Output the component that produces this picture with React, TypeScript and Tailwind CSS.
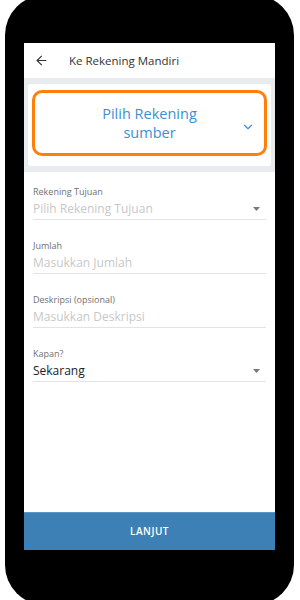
import { ArrowLeft, ChevronDown } from 'lucide-react';

function Caret() {
  return (
    <svg width="7" height="4" viewBox="0 0 7 4" className="shrink-0">
      <path d="M0 0 L7 0 L3.5 4 Z" fill="#7a7a7a" />
    </svg>
  );
}

interface FieldProps {
  label: string;
  value: string;
  filled?: boolean;
  dropdown?: boolean;
}

function Field({ label, value, filled, dropdown }: FieldProps) {
  return (
    <div className="h-[54px] pt-[13px]">
      <div className="text-[9px] leading-[12px] text-[#707070]">{label}</div>
      <div className="flex items-center justify-between h-[22px] pr-[6px] border-b border-[#e3e3e3]">
        <span className={filled ? 'text-[12px] text-[#222]' : 'text-[12px] text-[#c8c8c8]'}>{value}</span>
        {dropdown && <Caret />}
      </div>
    </div>
  );
}

export default function App() {
  return (
    <div className="w-[300px] h-[600px] bg-white overflow-hidden" style={{ fontFamily: '"Open Sans", sans-serif' }}>
      <div className="ml-[5px] -mt-[5px] w-[289px] h-[610px] bg-black rounded-[40px] pt-[48px] pl-[19px]">
        <div className="w-[251px] h-[507px] bg-white flex flex-col">
          <div className="h-[35px] flex items-center shrink-0">
            <ArrowLeft size={15} strokeWidth={1.8} className="ml-[10px] text-[#333]" />
            <span className="ml-[20px] text-[11.5px] text-[#333]">Ke Rekening Mandiri</span>
          </div>
          <div className="bg-[#e9ecef] h-[94px] px-[4px] pt-[6px] shrink-0">
            <div className="bg-white rounded-[3px] h-[82px] px-[4px] pt-[6px]">
              <div className="h-[66px] border-[3px] border-[#ff7f0a] rounded-[10px] relative flex items-center justify-center">
                <div className="text-[14.5px] leading-[19px] text-[#3d8fd1] text-center">
                  Pilih Rekening
                  <br />
                  sumber
                </div>
                <ChevronDown size={14} strokeWidth={2} className="absolute right-[9px] top-[27px] text-[#3d8fd1]" />
              </div>
            </div>
          </div>
          <div className="flex-1 px-[9px] pt-[1px]">
            <Field label="Rekening Tujuan" value="Pilih Rekening Tujuan" dropdown />
            <Field label="Jumlah" value="Masukkan Jumlah" />
            <Field label="Deskripsi (opsional)" value="Masukkan Deskripsi" />
            <Field label="Kapan?" value="Sekarang" filled dropdown />
          </div>
          <button className="h-[38px] shrink-0 bg-[#3d80b5] border-t border-[#5b95c4] text-white text-[10px] font-semibold tracking-[0.5px]">
            LANJUT
          </button>
        </div>
      </div>
    </div>
  );
}
